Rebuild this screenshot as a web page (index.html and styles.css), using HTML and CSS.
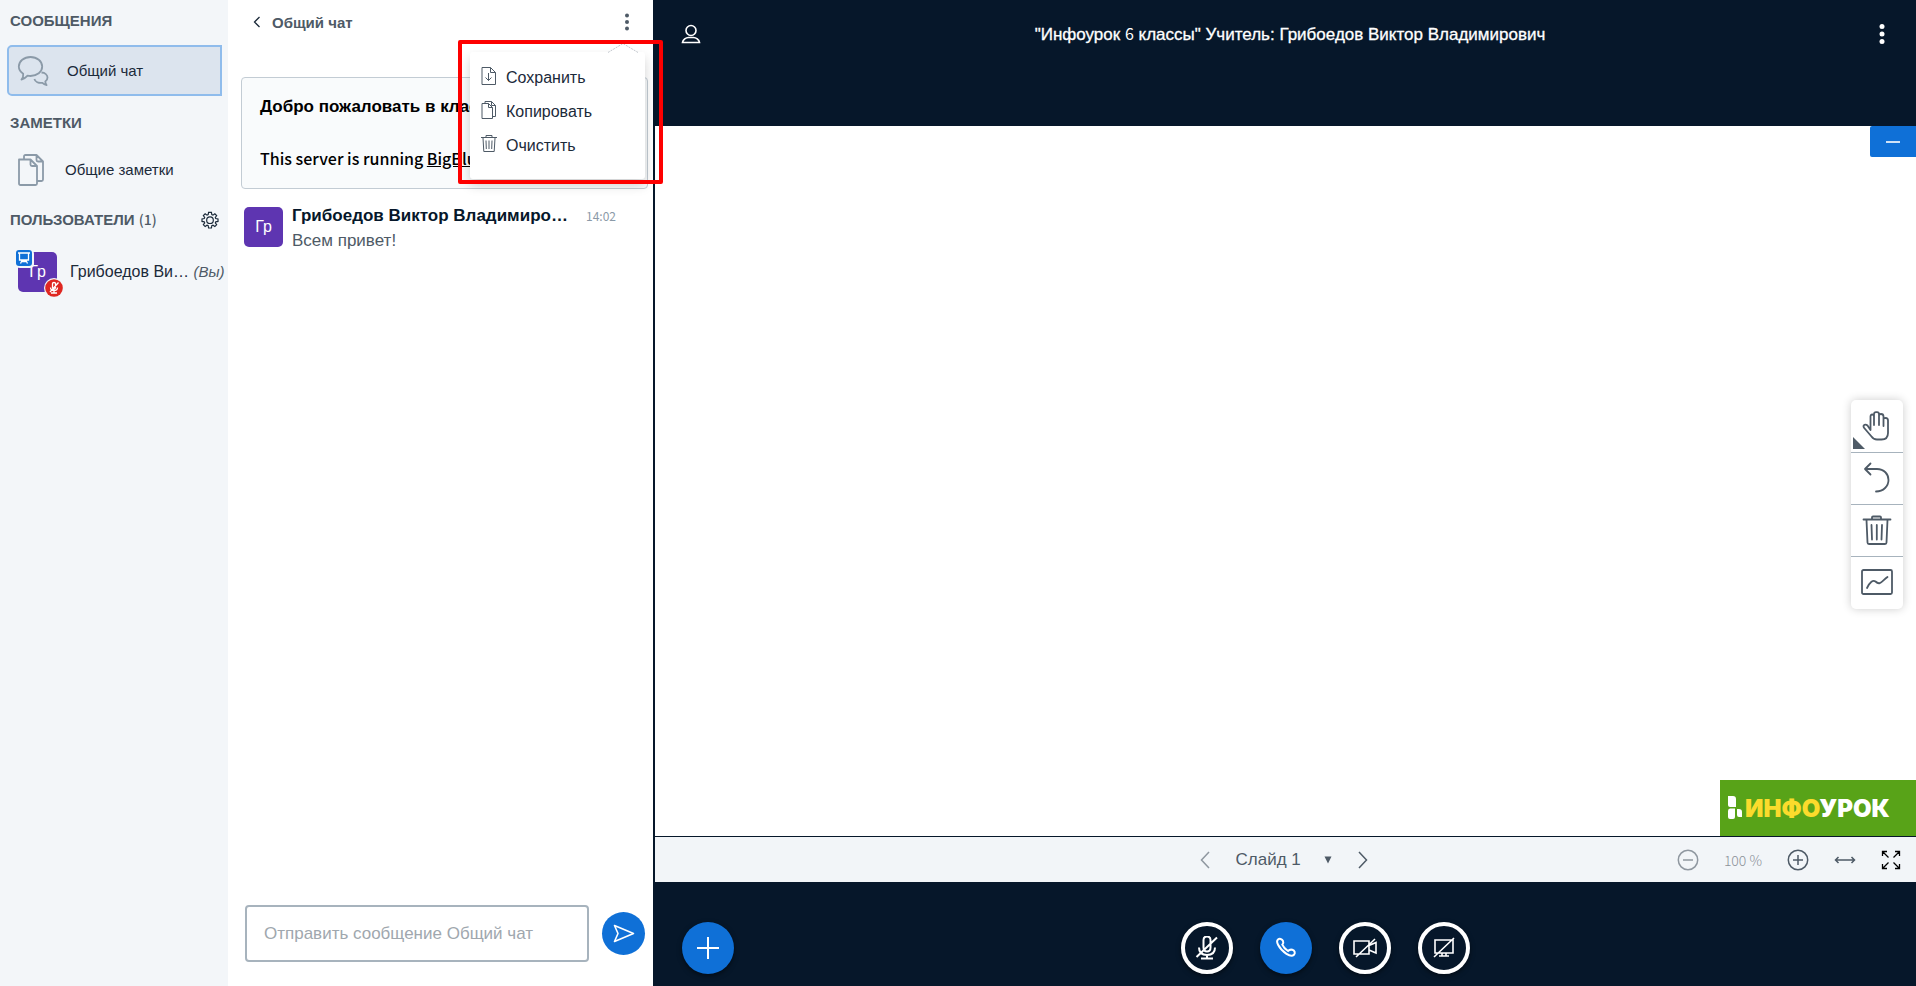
FILE: index.html
```
<!DOCTYPE html>
<html lang="ru">
<head>
<meta charset="utf-8">
<meta name="viewport" content="width=device-width, initial-scale=1">
<title>Инфоурок 6 классы</title>
<link rel="stylesheet" href="styles.css">
</head>
<body>
<nav class="sidebar">
  <h2 class="section-title">СООБЩЕНИЯ</h2>
  <a class="side-item side-item-active" href="#chat">
    <svg class="side-icon" viewBox="0 0 32 32" width="32" height="32"><path d="M4.500 24.500C6 22.500 6.500 21 6.200 18.800C3.500 17 1.800 14.500 1.800 11.600C1.800 6.200 7 2 13.500 2S25.200 6.200 25.200 11.600S20 21 13.500 21C12.500 21 11.500 20.900 10.600 20.700C9 22.500 7 24 4.500 24.500Z"/><path d="M24.500 17.500C28 17.700 30.500 19.800 30.500 22.600C30.500 24.200 29.700 25.600 28.300 26.500C28.300 27.900 28.700 29 29.600 30C27.800 29.700 26.400 28.900 25.400 27.800C21.500 28.300 18.200 26.700 17.400 24"/></svg>
    <span>Общий чат</span>
  </a>
  <h2 class="section-title">ЗАМЕТКИ</h2>
  <a class="side-item side-item-notes" href="#notes">
    <svg class="side-icon side-icon-notes" viewBox="0 0 28 32" width="28" height="32"><path d="M2 5.500H13.500L20 12V29.500Q20 31 18.500 31H3.500Q2 31 2 29.500ZM13.500 5.500V10.500Q13.500 12 15 12H20M7 5V2.500Q7 1 8.500 1H19.500L26 7.500V25.500Q26 27 24.500 27H20.500M19.500 1V6Q19.500 7.500 21 7.500H26"/></svg>
    <span>Общие заметки</span>
  </a>
  <div class="users-head">
    <h2 class="section-title">ПОЛЬЗОВАТЕЛИ <span class="latin">(1)</span></h2>
    <button class="icon-button" type="button" aria-label="Управление пользователями">
      <svg class="stroke-dark" viewBox="0 0 20 20" width="18" height="18"><path d="M8.400 1.500H11.600L12 4L13.300 4.600L15.400 3.100L17.400 5.100L15.900 7.200L16.400 8.400L18.900 8.800V11.600L16.400 12L15.900 13.200L17.400 15.300L15.400 17.300L13.300 15.800L12 16.400L11.600 18.900H8.400L8 16.400L6.700 15.800L4.600 17.300L2.600 15.300L4.100 13.200L3.600 12L1.100 11.600V8.800L3.600 8.400L4.100 7.200L2.600 5.100L4.600 3.100L6.700 4.600L8 4Z"/><circle cx="10" cy="10.200" r="3.700"/></svg>
    </button>
  </div>
  <a class="user" href="#user">
    <span class="avatar">Гр
      <svg class="badge badge-presenter" viewBox="0 0 18 18" width="18" height="18"><rect x="0" y="0" width="18" height="18" rx="4" fill="#f3f6f9"/><rect x="0" y="0" width="16" height="16" rx="3" fill="#0f70d7"/><path d="M2 3H14M3.500 3V10H12.500V3M6 10.500L4.500 13.500M10 10.500L11.500 13.500M6 11.500H10" fill="none" stroke="#fff" stroke-width="1.300"/></svg>
      <svg class="badge badge-mic" viewBox="0 0 20 20" width="20" height="20"><circle cx="10" cy="10" r="10" fill="#f3f6f9"/><circle cx="10" cy="10" r="8.800" fill="#df2721"/><path d="M8.500 5.500Q8.500 4.500 10 4.500T11.500 5.500V9.500Q11.500 11 10 11T8.500 9.500ZM6.500 9.500Q6.500 12.500 10 12.500T13.500 9.500M10 12.500V15M7 15H13M6 14L14.500 4.500" fill="none" stroke="#fff" stroke-width="1.300"/></svg>
    </span>
    <span class="user-name">Грибоедов Ви… <em>(Вы)</em></span>
  </a>
</nav>

<section class="chat" id="chat">
  <header class="chat-head">
    <button class="chat-back" type="button">
      <svg class="stroke-dark" viewBox="0 0 8 12" width="8" height="12"><path d="M6.500 1L1.500 6L6.500 11"/></svg>
      <span>Общий чат</span>
    </button>
    <button class="icon-button" type="button" aria-label="Параметры чата">
      <svg class="solid-gray" viewBox="0 0 6 18" width="6" height="18"><circle cx="3" cy="2.500" r="2"/><circle cx="3" cy="9" r="2"/><circle cx="3" cy="15.500" r="2"/></svg>
    </button>
    <div class="menu">
      <svg class="menu-tip" viewBox="0 0 32 10" width="32" height="10"><path d="M1 9.500L16 0.500L31 9.500" fill="#fff" stroke="#c3c8ce" stroke-dasharray="2 1"/></svg>
      <button class="menu-item" type="button">
        <svg viewBox="0 0 16 18" width="16" height="18"><path d="M1 0.500H9.500L14.500 5.500V17.500H1ZM9.500 0.500V5.500H14.500M7.500 6V13.500M4.500 10.500L7.500 13.500L10.500 10.500"/></svg>Сохранить</button>
      <button class="menu-item" type="button">
        <svg viewBox="0 0 16 18" width="16" height="18"><path d="M1 2.500H7.500L11.500 6.500V17.500H1ZM7.500 2.500V6.500H11.500M4 2.500V0.500H10.500L14.500 4.500V15.500H11.500M10.500 0.500V4.500H14.500"/></svg>Копировать</button>
      <button class="menu-item" type="button">
        <svg viewBox="0 0 16 18" width="16" height="18"><path d="M0 2.500H16M5 2V0.500H11V2M2 3L2.800 16.500H13.200L14 3M5 5.500L5.300 14M8 5.500V14M11 5.500L10.700 14"/></svg>Очистить</button>
    </div>
    <div class="highlight"></div>
  </header>

  <div class="messages">
    <div class="welcome">
      <p>Добро пожаловать в класс!</p>
      <p class="latin">This server is running <a href="#bbb">BigBlueButton</a>.</p>
    </div>
    <article class="message">
      <span class="avatar">Гр</span>
      <div class="message-body">
        <div class="message-meta"><strong>Грибоедов Виктор Владимирович</strong><time class="latin">14:02</time></div>
        <p>Всем привет!</p>
      </div>
    </article>
  </div>

  <form class="composer">
    <input class="composer-input" type="text" aria-label="Сообщение" placeholder="Отправить сообщение Общий чат">
    <button class="send" type="button" aria-label="Отправить">
      <svg viewBox="0 0 22 20" width="22" height="20"><path d="M1.500 1.500L20.500 9.500L1.500 17.500L5 9.500Z" fill="none" stroke="#fff" stroke-width="1.600" stroke-linejoin="round"/></svg>
    </button>
  </form>
</section>

<main class="main">
  <header class="topbar">
    <button class="icon-button" type="button" aria-label="Список пользователей">
      <svg class="stroke-white" viewBox="0 0 20 20" width="20" height="20"><ellipse cx="10" cy="6.500" rx="5" ry="5"/><path d="M1.500 18.500C2 15.500 5 13.500 7.500 13.500H12.500C15 13.500 18 15.500 18.500 18.500Z"/></svg>
    </button>
    <h1 class="title">"Инфоурок <span class="digit">6</span> классы" Учитель: Грибоедов Виктор Владимирович</h1>
    <button class="icon-button" type="button" aria-label="Параметры">
      <svg class="solid-white" viewBox="0 0 6 20" width="6" height="20"><circle cx="3" cy="2.500" r="2.500"/><circle cx="3" cy="10" r="2.500"/><circle cx="3" cy="17.500" r="2.500"/></svg>
    </button>
  </header>

  <section class="board">
    <button class="minimize" type="button" aria-label="Свернуть презентацию"><svg class="stroke-white" viewBox="0 0 14 2" width="14" height="2"><path d="M0 1H14"/></svg></button>
    <div class="tools">
      <button class="tool tool-current" type="button" aria-label="Панорамирование">
        <svg viewBox="0 0 32 32" width="32" height="32"><path d="M9.500 17V6.500Q9.500 4.500 11.200 4.500T13 6.500V15M13 6.500V4.200Q13 2.200 15 2.200H16Q18 2.200 18 4.200V15M18 5.500Q18.200 4 20 4Q22.500 4 22.500 6.500V16M22.500 9Q23 7.800 24.500 7.800Q27 8 27 10.500V23Q27 29.500 20.500 29.500H16Q12.500 29.500 10.500 26.500L2.800 17.500Q2 15.500 3.500 14.800Q5 14.200 6.500 15.500L9.500 20V16"/></svg>
      </button>
      <button class="tool" type="button" aria-label="Отменить">
        <svg viewBox="0 0 32 32" width="32" height="32"><path d="M9.500 1.500L4 7L9.500 12.500M4 7H16C23 7 27.500 12 27.500 18S22.500 29.500 15 29.500"/></svg>
      </button>
      <button class="tool" type="button" aria-label="Удалить всё">
        <svg viewBox="0 0 32 32" width="32" height="32"><path d="M2.500 5.500H29.500M11 5V3.500Q11 2.500 12 2.500H19Q20 2.500 20 3.500V5M5.500 6L6.500 28.500Q6.500 30 8 30H24Q25.500 30 25.500 28.500L26.500 6M10.500 11L11 25.500M15.800 11V25.500M21 11L20.500 25.500"/></svg>
      </button>
      <button class="tool" type="button" aria-label="Многопользовательский режим">
        <svg viewBox="0 0 32 32" width="32" height="32"><rect x="1" y="4" width="30" height="24" rx="1.500"/><path d="M6 22C9 16 12 13.500 14.500 15.500C19 20 21 15 26.500 11"/></svg>
      </button>
    </div>
    <div class="logo">
      <svg class="solid-white" viewBox="0 0 14 24" width="14" height="24"><path d="M0 0H5Q8 0 8 3V11H2Q0 11 0 9ZM0 15Q0 12.500 2 12.500H7V21Q7 23 5 23H2Q0 23 0 21ZM9 13H11Q14 13 14 16V21H11Q9 21 9 19Z"/></svg>
      <span class="logo-text"><b>ИНФО</b>УРОК</span>
    </div>
  </section>

  <div class="slidebar">
    <div></div>
    <div class="slide-nav">
      <button class="icon-button faded" type="button" aria-label="Предыдущий слайд"><svg class="stroke-gray" viewBox="0 0 10 18" width="10" height="18"><path d="M9 1L1.500 9L9 17"/></svg></button>
      <label class="slide-pick">
        <select aria-label="Выбор слайда"><option>Слайд 1</option></select>
        <svg class="solid-gray" viewBox="0 0 8 8" width="8" height="8"><path d="M0.500 0.500H7.500L4 7.500Z"/></svg>
      </label>
      <button class="icon-button" type="button" aria-label="Следующий слайд"><svg class="stroke-gray" viewBox="0 0 10 18" width="10" height="18"><path d="M1 1L8.500 9L1 17"/></svg></button>
    </div>
    <div class="zoom">
      <button class="icon-button faded" type="button" aria-label="Уменьшить"><svg class="stroke-gray" viewBox="0 0 22 22" width="22" height="22"><circle cx="11" cy="11" r="9.700"/><path d="M6 11H16"/></svg></button>
      <span class="zoom-value">100 %</span>
      <button class="icon-button" type="button" aria-label="Увеличить"><svg class="stroke-gray" viewBox="0 0 22 22" width="22" height="22"><circle cx="11" cy="11" r="9.700"/><path d="M6 11H16M11 6V16"/></svg></button>
      <button class="icon-button" type="button" aria-label="По ширине"><svg class="stroke-gray" viewBox="0 0 22 8" width="22" height="8"><path d="M1.500 4H20.500M4.500 1L1.500 4L4.500 7M17.500 1L20.500 4L17.500 7"/></svg></button>
      <button class="icon-button" type="button" aria-label="Во весь экран"><svg class="stroke-black" viewBox="0 0 20 20" width="20" height="20"><path d="M1.500 6V1.500H6M1.500 1.500L7.500 7.500M14 1.500H18.500V6M18.500 1.500L12.500 7.500M1.500 14V18.500H6M1.500 18.500L7.500 12.500M14 18.500H18.500V14M18.500 18.500L12.500 12.500"/></svg></button>
    </div>
  </div>

  <footer class="actions">
    <button class="round round-blue" type="button" aria-label="Действия"><svg class="stroke-white stroke-bold" viewBox="0 0 24 24" width="24" height="24"><path d="M1 12H23M12 1V23"/></svg></button>
    <div class="actions-center">
      <button class="round round-ring" type="button" aria-label="Микрофон"><svg class="stroke-white stroke-bold" viewBox="0 0 24 24" width="24" height="24"><path d="M8.500 4Q8.500 0.500 12 0.500T15.500 4V11.500Q15.500 15.500 12 15.500T8.500 11.500ZM4 11.500Q4 19 12 19T20 11.500M12 19V22.500M6 22.500H18M1.500 21L22 1.500"/></svg></button>
      <button class="round round-blue" type="button" aria-label="Выйти из аудио"><svg class="stroke-white stroke-bold" viewBox="0 0 24 24" width="24" height="24"><path d="M4 3.500C5.500 2.300 8 2.800 9 5C9.800 6.800 9 8 8.300 8.700C9.500 11.500 11.500 13.500 14 15C15.200 13.800 16.500 13.300 18.300 13.800C20.800 14.600 21.500 17 20 18.800C18.300 20.300 15.500 19.800 12.500 17.800C9 15.500 6 12.500 4.200 9C3 6.800 2.500 4.800 4 3.500Z"/></svg></button>
      <button class="round round-ring" type="button" aria-label="Веб-камера"><svg class="stroke-white" viewBox="0 0 24 24" width="24" height="24"><path d="M1 5H16V18H1ZM16 9.500L23 6.500V17L16 14M3 21L22 3"/></svg></button>
      <button class="round round-ring" type="button" aria-label="Демонстрация экрана"><svg class="stroke-white" viewBox="0 0 24 24" width="24" height="24"><path d="M3 4H21V17H3ZM10 17V20M14 17V20M7 20H17M2 21L22 2"/></svg></button>
    </div>
  </footer>
</main>
</body>
</html>
```

FILE: styles.css
```
* { box-sizing: border-box; }

body {
  margin: 0;
  min-height: 100vh;
  display: grid;
  grid-template-columns: 228px 425px minmax(0, 1fr);
  font-family: "Liberation Sans", Arial, sans-serif;
  font-size: 14px;
  color: #1b2a3a;
  background: #fff;
}

h1, h2, p { margin: 0; }
a { color: inherit; text-decoration: none; }
svg { display: block; flex: none; fill: none; }

button {
  border: 0;
  padding: 0;
  background: none;
  font: inherit;
  color: inherit;
  cursor: pointer;
}

.icon-button { display: flex; align-items: center; justify-content: center; }
.latin { font-family: "Noto Sans CJK SC", "Open Sans", sans-serif; }
.stroke-dark { stroke: #1b2a3a; stroke-width: 1.300; }
.stroke-gray { stroke: #4e5a66; stroke-width: 1.500; }
.stroke-white { stroke: #fff; stroke-width: 1.600; }
.stroke-black { stroke: #000; stroke-width: 1.300; }
.stroke-bold { stroke-width: 2; }
.solid-gray { fill: #4e5a66; }
.solid-white { fill: #fff; }
.faded { opacity: 0.6; }

/* Sidebar */
.sidebar { background: #f3f6f9; padding: 12px 6px 0 7px; }

.section-title {
  padding-left: 3px;
  font-size: 15px;
  line-height: 18px;
  font-weight: 700;
  color: #4e5a66;
}

.section-title .latin { font-size: 14px; font-weight: 500; line-height: 18px; }

.side-item {
  display: flex;
  align-items: center;
  height: 51px;
  color: #1b2a3a;
  font-size: 15px;
}

.side-item-active {
  gap: 18px;
  margin: 15px 0 18px;
  padding-left: 8px;
  border: 2px solid #8fbcec;
  border-radius: 5px 0 0 5px;
  background: #dce4ee;
}

.side-item-notes { gap: 20px; margin: 12px 0 15px; padding-left: 10px; }
.side-icon { stroke: #8b9aa8; stroke-width: 1.800; stroke-linejoin: round; }

.users-head {
  display: flex;
  justify-content: space-between;
  align-items: center;
  padding-right: 3px;
}

.user { display: flex; align-items: center; gap: 13px; margin-top: 23px; padding-left: 11px; }
.user-name { font-size: 16px; white-space: nowrap; }
.user-name em { color: #4e5a66; font-size: 15px; }

.avatar {
  position: relative;
  flex: none;
  display: flex;
  align-items: center;
  justify-content: center;
  width: 39px;
  height: 40px;
  border-radius: 5px;
  background: #5e35b1;
  color: #fff;
  font-size: 16px;
}

.badge { position: absolute; }
.badge-presenter { left: -2px; top: -2px; }
.badge-mic { right: -7px; bottom: -6px; }

/* Chat */
.chat { display: flex; flex-direction: column; padding: 12px 5px 24px 13px; background: #fff; }

.chat-head {
  position: relative;
  display: flex;
  justify-content: space-between;
  align-items: center;
  height: 20px;
  padding: 0 18px 0 12px;
}

.chat-back {
  display: flex;
  align-items: center;
  gap: 11px;
  font-size: 15px;
  font-weight: 700;
  color: #4e5a66;
}

.menu {
  position: absolute;
  z-index: 2;
  top: 40px;
  right: 3px;
  width: 175px;
  padding: 9px 0 7px;
  border-radius: 3px;
  background: #fff;
  box-shadow: 0 6px 12px rgba(0, 0, 0, 0.18);
}

.menu-tip { position: absolute; top: -9px; right: 6px; }

.menu-item {
  display: flex;
  align-items: center;
  gap: 9px;
  width: 100%;
  height: 34px;
  padding-left: 11px;
  font-size: 16px;
  color: #1b2a3a;
}

.menu-item svg { margin-bottom: 4px; stroke: #4e5a66; }

.menu-item:last-child { margin-bottom: 9px; }

.highlight {
  position: absolute;
  z-index: 3;
  top: 28px;
  right: -15px;
  width: 205px;
  height: 144px;
  border: 4px solid #fe0000;
  border-radius: 2px;
  pointer-events: none;
}

.messages { flex: 1; padding-top: 45px; }

.welcome {
  display: grid;
  gap: 26px;
  height: 112px;
  padding: 17px 18px;
  border: 1px solid #c3ccd4;
  border-radius: 4px;
  background: #f9fbfc;
  color: #000;
  font-size: 17px;
  font-weight: 700;
  line-height: 24px;
  white-space: nowrap;
}

.welcome .latin { font-size: 16px; font-weight: 500; }
.welcome a { text-decoration: underline; }

.message { display: flex; gap: 9px; margin-top: 15px; padding: 3px 32px 0 3px; }

.message-body {
  flex: 1;
  min-width: 0;
  margin-top: -4px;
  font-size: 17px;
  line-height: 25px;
  color: #4e5a66;
}

.message-meta { display: flex; gap: 12px; align-items: center; }

.message-meta strong {
  flex: 1;
  color: #06172a;
  overflow: hidden;
  text-overflow: ellipsis;
  white-space: nowrap;
}

.message-meta time { font-size: 12px; color: #8b9aa8; }

.composer { display: flex; align-items: center; gap: 13px; padding: 0 3px 0 4px; }

.composer-input {
  flex: 1;
  min-width: 0;
  height: 57px;
  padding: 0 17px;
  border: 2px solid #a7b3bd;
  border-radius: 4px;
  font-family: inherit;
  font-size: 17px;
}

.composer-input::placeholder { color: #a0a7ae; }

.send {
  display: flex;
  align-items: center;
  justify-content: center;
  width: 43px;
  height: 43px;
  border-radius: 50%;
  background: #0f70d7;
}

/* Main area */
.main {
  display: grid;
  grid-template-rows: 126px minmax(0, 1fr) 46px 104px;
  background: #06172a;
}

.topbar {
  display: flex;
  justify-content: space-between;
  align-items: flex-start;
  padding: 21px 31px 0 28px;
}

.topbar .icon-button { height: 25px; }

.title {
  color: #fff;
  font-size: 17px;
  font-weight: 400;
  line-height: 24px;
  -webkit-text-stroke: 0.3px #fff;
}

.digit { font-family: "Noto Sans CJK SC", sans-serif; font-size: 16px; -webkit-text-stroke: 0; line-height: 24px; }

.board {
  display: flex;
  flex-direction: column;
  align-items: flex-end;
  justify-content: space-between;
  margin-left: 2px;
  background: #fff;
}

.minimize {
  display: flex;
  align-items: center;
  justify-content: center;
  width: 46px;
  height: 31px;
  border-radius: 2px 0 0 2px;
  background: #0f70d7;
}

.tools {
  display: grid;
  width: 52px;
  margin: 71px 13px 0 0;
  padding-bottom: 1px;
  border-radius: 5px;
  background: #fff;
  box-shadow: 0 0 10px rgba(0, 0, 0, 0.2);
}

.tool {
  position: relative;
  display: flex;
  align-items: center;
  justify-content: center;
  height: 52px;
}

.tool + .tool { border-top: 1px solid #a7b3bd; }
.tool svg { stroke: #4e5a66; stroke-width: 1.800; stroke-linecap: round; stroke-linejoin: round; }

.tool-current::after {
  content: "";
  position: absolute;
  left: 2px;
  bottom: 3px;
  border-right: 12px solid transparent;
  border-bottom: 12px solid #4e5a66;
}

.logo {
  display: flex;
  align-items: center;
  gap: 3px;
  width: 196px;
  height: 56px;
  padding-left: 8px;
  background: #58a318;
}

.logo-text { color: #fff; font: 900 24px Inter, sans-serif; }
.logo-text b { color: #fbdb2c; font-weight: 900; }

.slidebar {
  display: grid;
  grid-template-columns: 1fr auto 1fr;
  align-items: center;
  margin-left: 2px;
  border-top: 1px solid #06172a;
  background: #f2f5f8;
  color: #4e5a66;
}

.slide-nav { display: flex; align-items: center; gap: 26px; padding-right: 4px; }
.slide-pick { display: flex; align-items: center; gap: 22px; }

.slide-pick select {
  width: 66px;
  padding: 0;
  border: 0;
  appearance: none;
  background: none;
  color: inherit;
  font-family: inherit;
  font-size: 17px;
}

.zoom { display: flex; align-items: center; justify-content: flex-end; gap: 25px; padding-right: 15px; }
.zoom-value { font: 300 14px "Noto Sans CJK SC", sans-serif; line-height: 20px; color: #8b9199; }

.actions { display: flex; align-items: center; padding: 28px 0 0 29px; }
.actions-center { flex: 1; display: flex; justify-content: center; gap: 27px; }

.round {
  display: flex;
  align-items: center;
  justify-content: center;
  width: 52px;
  height: 52px;
  border-radius: 50%;
  box-shadow: 0 2px 5px rgba(0, 0, 0, 0.5);
}

.round-blue { background: #0f70d7; }
.round-ring { border: 4px solid #fff; }
```
